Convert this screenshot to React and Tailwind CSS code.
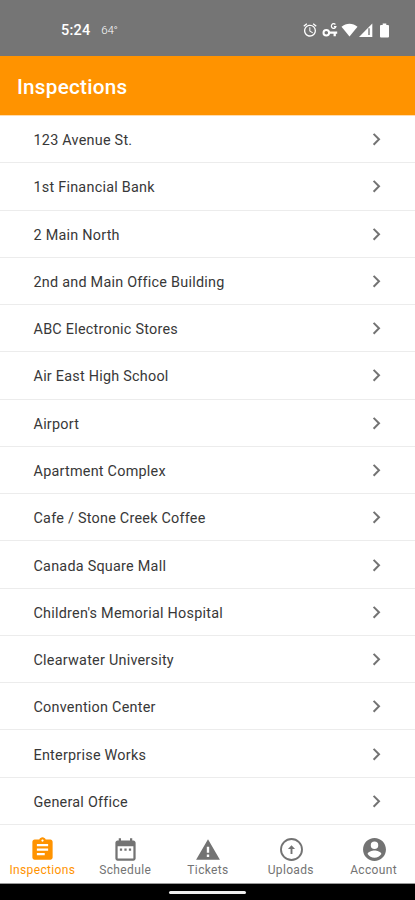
import React from "react";

const sites = [
  "123 Avenue St.",
  "1st Financial Bank",
  "2 Main North",
  "2nd and Main Office Building",
  "ABC Electronic Stores",
  "Air East High School",
  "Airport",
  "Apartment Complex",
  "Cafe / Stone Creek Coffee",
  "Canada Square Mall",
  "Children's Memorial Hospital",
  "Clearwater University",
  "Convention Center",
  "Enterprise Works",
  "General Office",
];

const tabs = [
  {
    label: "Inspections",
    active: true,
    size: "h-[27px] w-[27px]",
    path: "M19 3h-4.18C14.4 1.84 13.3 1 12 1c-1.3 0-2.4.84-2.82 2H5c-1.1 0-2 .9-2 2v14c0 1.1.9 2 2 2h14c1.1 0 2-.9 2-2V5c0-1.1-.9-2-2-2zm-7 0c.55 0 1 .45 1 1s-.45 1-1 1-1-.45-1-1 .45-1 1-1zm2 14H7v-2h7v2zm3-4H7v-2h10v2zm0-4H7V7h10v2z",
  },
  {
    label: "Schedule",
    size: "h-[27px] w-[27px]",
    path: "M9 11H7v2h2v-2zm4 0h-2v2h2v-2zm4 0h-2v2h2v-2zm2-7h-1V2h-2v2H8V2H6v2H5c-1.11 0-1.99.9-1.99 2L3 20c0 1.1.89 2 2 2h14c1.1 0 2-.9 2-2V6c0-1.1-.9-2-2-2zm0 16H5V9h14v11z",
  },
  {
    label: "Tickets",
    size: "h-[26px] w-[26px]",
    path: "M1 21h22L12 2 1 21zm12.1-2.6h-2.2v-2.2h2.2v2.2zm0-3.8h-2.2V9h2.2v5.6z",
  },
  {
    label: "Uploads",
    size: "h-[25px] w-[25px]",
    path: "M12 1a11 11 0 1 0 0 22 11 11 0 0 0 0-22zm0 20.2a9.2 9.2 0 1 1 0-18.4 9.2 9.2 0 0 1 0 18.4zM11.1 16.2v-4.7H8.6L12 7.8l3.4 3.7h-2.5v4.7z",
  },
  {
    label: "Account",
    size: "h-[25px] w-[25px]",
    path: "M12 1C5.93 1 1 5.93 1 12s4.93 11 11 11 11-4.93 11-11S18.07 1 12 1zm0 3.3a3.6 3.6 0 1 1 0 7.2 3.6 3.6 0 0 1 0-7.2zm0 15.6c-2.75 0-5.18-1.4-6.6-3.55.03-2.2 4.4-3.4 6.6-3.4s6.57 1.2 6.6 3.4A7.9 7.9 0 0 1 12 19.9z",
  },
];

function StatusBar() {
  return (
    <div className="flex h-14 shrink-0 items-center bg-[#757575] pt-[5px] pr-[26px] pl-[61px] text-white">
      <span className="pt-px text-[14.5px] leading-none font-medium tracking-[0.2px]">5:24</span>
      <span className="ml-[11px] text-[11.5px] leading-none font-light tracking-[-0.3px]">64°</span>
      <div className="ml-auto flex items-center pb-px">
        <svg className="h-[16px] w-[16px]" viewBox="0 0 24 24" fill="currentColor">
          <path d="M22 5.72l-4.6-3.86-1.29 1.53 4.6 3.86L22 5.72zM7.88 3.39L6.6 1.86 2 5.71l1.29 1.53 4.59-3.85zM12.5 8H11v6l4.75 2.85.75-1.23-4-2.37V8zM12 4c-4.97 0-9 4.03-9 9s4.02 9 9 9a9 9 0 0 0 0-18zm0 16c-3.87 0-7-3.13-7-7s3.13-7 7-7 7 3.13 7 7-3.13 7-7 7z" />
        </svg>
        <svg className="ml-[4px] h-4 w-4" viewBox="0 0 16 16" fill="none" stroke="currentColor">
          <circle cx="4.3" cy="10.7" r="2.8" strokeWidth="2" />
          <path d="M7 10.7h8.2M12.7 10.7v3.5" strokeWidth="2.3" />
          <path d="M13.4 2.5a2.3 2.3 0 1 0 .5 2.1h-2" strokeWidth="1.2" />
        </svg>
        <svg className="ml-[3px] h-[14px] w-[17px]" viewBox="0 0 17 14" fill="currentColor">
          <path d="M0.5 3.7C5.2-.3 11.8-.3 16.5 3.7L8.5 13.6z" />
        </svg>
        <svg className="ml-px h-[14px] w-[14px]" viewBox="0 0 14 14" fill="currentColor">
          <path d="M0 14L13.3.5V14z" />
          <path d="M10 5.2v6.7" stroke="#757575" strokeWidth="1.4" />
        </svg>
        <svg className="ml-[7px] h-[15px] w-[9px]" viewBox="0 0 9 15" fill="currentColor">
          <path d="M2.7.5h3.6V2H8q1 0 1 1v10.5q0 1-1 1H1q-1 0-1-1V3q0-1 1-1h1.7z" />
        </svg>
      </div>
    </div>
  );
}

function SiteRow({ name }) {
  return (
    <li className="flex min-h-0 flex-1 items-center justify-between border-b border-[#ececec] pt-px pr-[33px] pl-[33.5px]">
      <span className="pt-[3px] text-[14.4px] leading-5 tracking-[0.24px] whitespace-nowrap text-[#383838]">
        {name}
      </span>
      <svg className="h-[13px] w-[11px]" viewBox="0 0 11 13" fill="none" stroke="#737373" strokeWidth="2">
        <path d="M2.6 .9L8 6.3 2.6 11.7" />
      </svg>
    </li>
  );
}

function TabBar() {
  return (
    <nav className="grid h-[59px] shrink-0 grid-cols-5 border-b border-[#999] bg-white pl-[1px]">
      {tabs.map((tab) => (
        <div
          key={tab.label}
          className={`flex flex-col items-center pt-[11px] ${tab.active ? "text-[#ff9300]" : "text-[#737373]"}`}
        >
          <div className="flex h-[27px] shrink-0 items-center pl-px">
            <svg className={tab.size} viewBox="0 0 24 24" fill="currentColor">
              <path d={tab.path} />
            </svg>
          </div>
          <span className="text-[12px] leading-[15px] tracking-[0.35px]">{tab.label}</span>
        </div>
      ))}
    </nav>
  );
}

export default function App() {
  return (
    <div className="flex h-[900px] w-[415px] flex-col overflow-hidden bg-white font-[Roboto,sans-serif]">
      <StatusBar />
      <header className="flex h-[59px] shrink-0 items-center bg-[#ff9300] pt-[3px] pl-[17px]">
        <h1 className="text-[20.7px] leading-6 font-medium tracking-[0.25px] text-white">Inspections</h1>
      </header>
      <ul className="flex min-h-0 flex-1 flex-col border-t border-[#ffdcae]">
        {sites.map((name) => (
          <SiteRow key={name} name={name} />
        ))}
      </ul>
      <TabBar />
      <div className="flex h-4 shrink-0 justify-center bg-black pt-[7px]">
        <div className="h-[3px] w-[77px] rounded-full bg-[#eee]" />
      </div>
    </div>
  );
}
